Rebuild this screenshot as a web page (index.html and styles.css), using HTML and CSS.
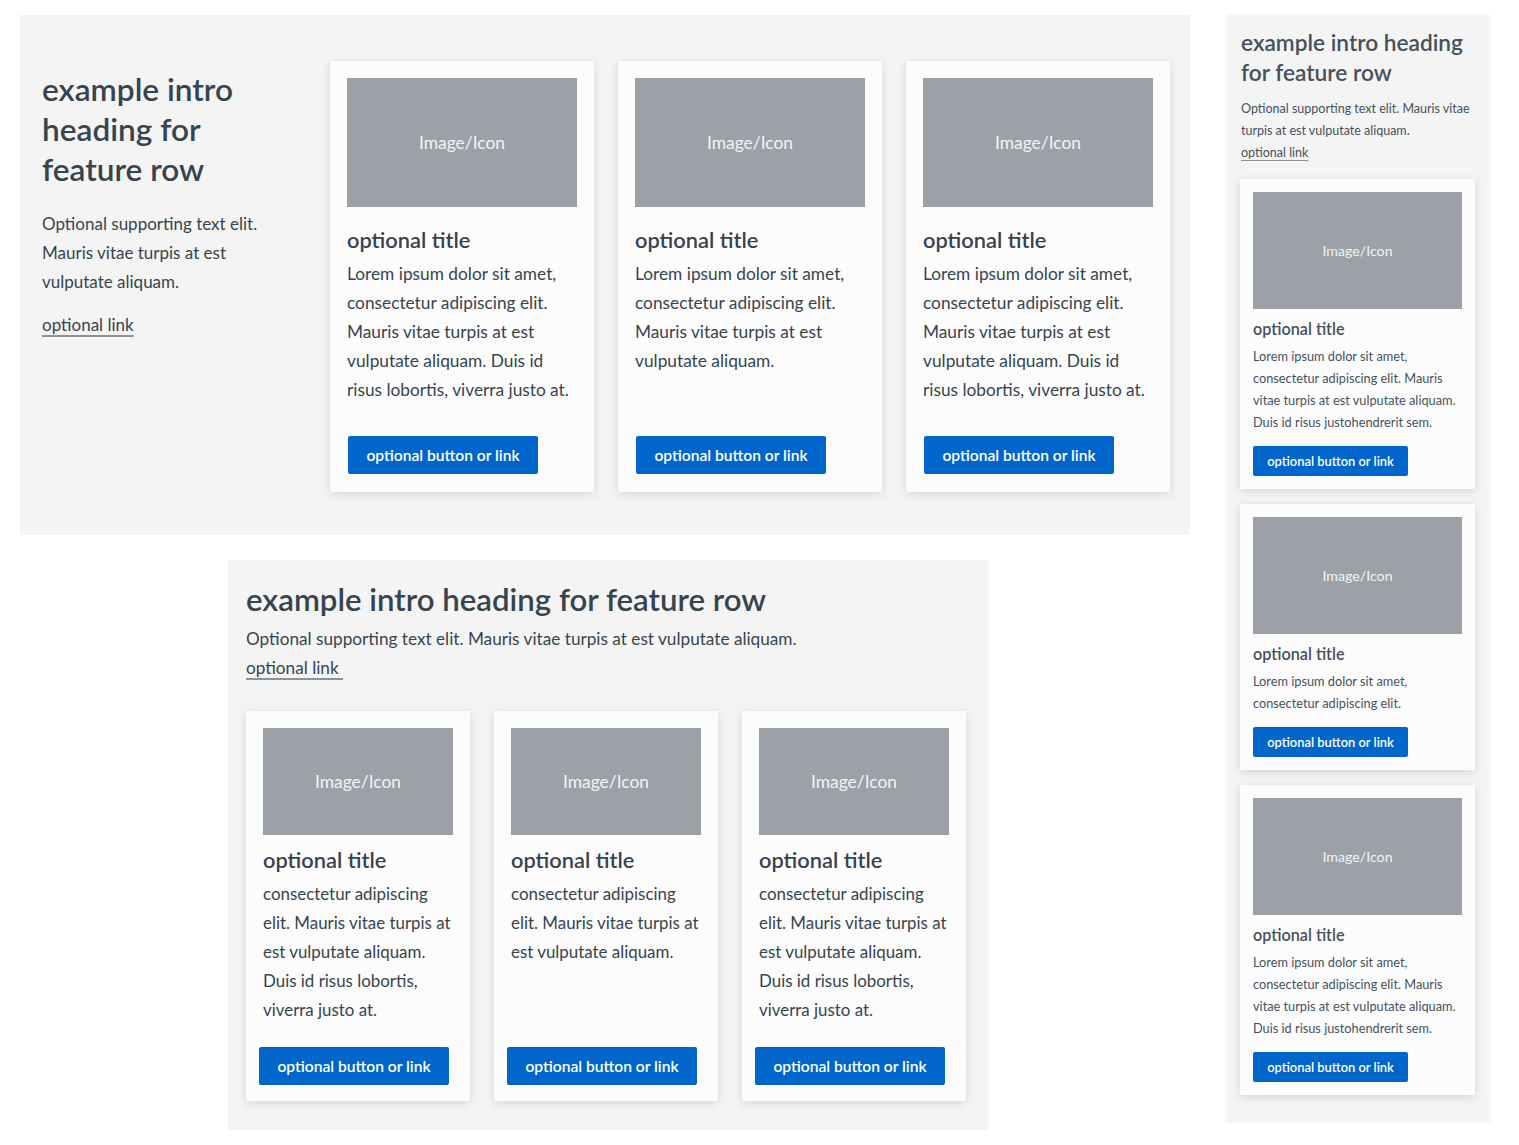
FILE: index.html
```html
<html>
    <head>
<link rel="stylesheet" href="styles.css">
    </head>
    <body>
        <div class="page">
            <div class="main">
                <!-- Wide layout: intro column beside the cards -->
                <div class="row row-wide">
                    <div class="intro">
                        <h2>example intro heading for feature row</h2>
                        <p>Optional supporting text elit. Mauris vitae turpis at est vulputate aliquam.</p>
                        <a href="#" class="link">optional link</a>
                    </div>
                    <div class="cards">
                        <div class="card">
                            <div class="media">Image/Icon</div>
                            <h3>optional title</h3>
                            <p>Lorem ipsum dolor sit amet, consectetur adipiscing elit. Mauris vitae turpis at est vulputate aliquam. Duis id risus lobortis, viverra justo at.</p>
                            <a href="#" class="btn">optional button or link</a>
                        </div>
                        <div class="card">
                            <div class="media">Image/Icon</div>
                            <h3>optional title</h3>
                            <p>Lorem ipsum dolor sit amet, consectetur adipiscing elit. Mauris vitae turpis at est vulputate aliquam.</p>
                            <a href="#" class="btn">optional button or link</a>
                        </div>
                        <div class="card">
                            <div class="media">Image/Icon</div>
                            <h3>optional title</h3>
                            <p>Lorem ipsum dolor sit amet, consectetur adipiscing elit. Mauris vitae turpis at est vulputate aliquam. Duis id risus lobortis, viverra justo at.</p>
                            <a href="#" class="btn">optional button or link</a>
                        </div>
                    </div>
                </div>
                <!-- Medium layout: intro stacked above the cards -->
                <div class="row row-medium">
                    <div class="intro">
                        <h2>example intro heading for feature row</h2>
                        <p>Optional supporting text elit. Mauris vitae turpis at est vulputate aliquam.<br><a href="#" class="link">optional link&nbsp;</a></p>
                    </div>
                    <div class="cards">
                        <div class="card">
                            <div class="media">Image/Icon</div>
                            <h3>optional title</h3>
                            <p>consectetur adipiscing elit. Mauris vitae turpis at est vulputate aliquam. Duis id risus lobortis, viverra justo at.</p>
                            <a href="#" class="btn">optional button or link</a>
                        </div>
                        <div class="card">
                            <div class="media">Image/Icon</div>
                            <h3>optional title</h3>
                            <p>consectetur adipiscing elit. Mauris vitae turpis at est vulputate aliquam.</p>
                            <a href="#" class="btn">optional button or link</a>
                        </div>
                        <div class="card">
                            <div class="media">Image/Icon</div>
                            <h3>optional title</h3>
                            <p>consectetur adipiscing elit. Mauris vitae turpis at est vulputate aliquam. Duis id risus lobortis, viverra justo at.</p>
                            <a href="#" class="btn">optional button or link</a>
                        </div>
                    </div>
                </div>
            </div>
            <!-- Narrow layout: everything stacked -->
            <div class="row row-narrow">
                <div class="intro">
                    <h2>example intro heading for feature row</h2>
                    <p>Optional supporting text elit. Mauris vitae turpis at est vulputate aliquam.<br><a href="#" class="link">optional link</a></p>
                </div>
                <div class="cards">
                    <div class="card">
                        <div class="media">Image/Icon</div>
                        <h3>optional title</h3>
                        <p>Lorem ipsum dolor sit amet, consectetur adipiscing elit. Mauris vitae turpis at est vulputate aliquam. Duis id risus justohendrerit sem.</p>
                        <a href="#" class="btn">optional button or link</a>
                    </div>
                    <div class="card">
                        <div class="media">Image/Icon</div>
                        <h3>optional title</h3>
                        <p>Lorem ipsum dolor sit amet, consectetur adipiscing elit.</p>
                        <a href="#" class="btn">optional button or link</a>
                    </div>
                    <div class="card">
                        <div class="media">Image/Icon</div>
                        <h3>optional title</h3>
                        <p>Lorem ipsum dolor sit amet, consectetur adipiscing elit. Mauris vitae turpis at est vulputate aliquam. Duis id risus justohendrerit sem.</p>
                        <a href="#" class="btn">optional button or link</a>
                    </div>
                </div>
            </div>
        </div>
    </body>
</html>
```

FILE: styles.css
```css
/* Base */
body {
    margin: 0;
    background: #ffffff;
    font-family: Lato, "Liberation Sans", sans-serif;
    color: #37444e;
}
h2, h3, p {
    margin: 0;
}
.page {
    display: flex;
    align-items: flex-start;
    padding: 15px 0 0 20px;
}
.main {
    display: flex;
    flex-direction: column;
}
/* Shared row + card pieces */
.row {
    background: #f4f4f4;
    box-sizing: border-box;
}
.row h2 {
    font-weight: 600;
}
.link {
    color: #37444e;
    text-decoration: underline;
    text-decoration-color: #8b939a;
    text-decoration-thickness: 2px;
    text-underline-offset: 4px;
}
.cards {
    display: flex;
}
.card {
    display: flex;
    flex-direction: column;
    box-sizing: border-box;
    background: #fcfcfc;
    box-shadow: 0 2px 9px rgba(0,0,0,0.13);
}
.card p {
    flex-grow: 1; /* pushes the button to the bottom of the card */
}
.media {
    display: flex;
    align-items: center;
    justify-content: center;
    background: #9ba1a7;
    color: #f3f4f5;
}
.card h3 {
    font-weight: 600;
}
.btn {
    display: flex;
    align-items: center;
    justify-content: center;
    background: #0066cc;
    color: #ffffff;
    font-weight: 600;
    text-decoration: none;
    border-radius: 2px;
}
/* Wide row */
.row-wide {
    display: flex;
    width: 1170px;
    padding: 46px 20px 43px 22px;
}
.row-wide .intro {
    width: 288px;
    flex: none;
    padding-top: 8px;
}
.row-wide h2 {
    font-size: 31.6px;
    line-height: 40px;
    width: 240px;
}
.row-wide .intro p {
    margin-top: 20px;
    font-size: 17px;
    line-height: 29px;
    width: 235px;
}
.row-wide .intro .link {
    display: inline-block;
    margin-top: 14px;
    font-size: 17px;
    line-height: 29px;
}
.row-wide .cards, .row-medium .cards {
    gap: 24px;
}
.row-wide .card {
    width: 264px;
    padding: 17px 17px 18px 17px;
}
.row-wide .media {
    height: 129px;
    font-size: 17.4px;
}
.row-wide h3 {
    margin-top: 19px;
    font-size: 21.8px;
    line-height: 28px;
}
.row-wide .card p {
    margin-top: 5px;
    font-size: 17.3px;
    line-height: 29px;
}
.row-wide .btn {
    width: 190px;
    height: 38px;
    margin-left: 1px;
    margin-top: 32px;
    font-size: 15.6px;
}
/* Medium row */
.row-medium {
    width: 761px;
    margin: 25px 0 0 208px;
    padding: 19px 23px 29px 18px;
}
.row-medium h2 {
    font-size: 31.2px;
    line-height: 40px;
}
.row-medium .intro p {
    margin-top: 5px;
    font-size: 17.2px;
    line-height: 29px;
}
.row-medium .cards {
    margin-top: 29px;
}
.row-medium .card {
    width: 224px;
    height: 390px;
    padding: 17px 17px 16px 17px;
}
.row-medium .media {
    height: 107px;
    font-size: 17.4px;
}
.row-medium h3 {
    margin-top: 11px;
    font-size: 21.8px;
    line-height: 28px;
}
.row-medium .card p {
    margin-top: 5px;
    font-size: 16.9px;
    line-height: 29px;
}
.row-medium .btn {
    width: 190px;
    height: 38px;
    margin-left: -4px;
    font-size: 15.6px;
}
/* Narrow row */
.row-narrow {
    width: 263px;
    height: 1107px;
    margin-left: 37px;
    padding: 13px 15px 0 14px;
    box-shadow: -1px 0 4px rgba(0,0,0,0.05);
    color: #45515b;
}
.row-narrow .link {
    color: #45515b;
    text-decoration-thickness: 1px;
    text-underline-offset: 3px;
}
.row-narrow h2 {
    font-size: 22.7px;
    line-height: 30px;
}
.row-narrow .intro p {
    margin-top: 10px;
    font-size: 12.5px;
    line-height: 22px;
}
.row-narrow .cards {
    flex-direction: column;
    gap: 15px;
    margin: 15px 0 0 -1px;
}
.row-narrow .card {
    width: 235px;
    padding: 13px;
}
.row-narrow .media {
    height: 117px;
    font-size: 14.2px;
}
.row-narrow h3 {
    margin-top: 9px;
    font-size: 16.2px;
    line-height: 22px;
}
.row-narrow .card p {
    margin-top: 5px;
    font-size: 12.75px;
    line-height: 22px;
}
.row-narrow .btn {
    width: 155px;
    height: 30px;
    margin-top: 13px;
    font-size: 12.9px;
}
```
